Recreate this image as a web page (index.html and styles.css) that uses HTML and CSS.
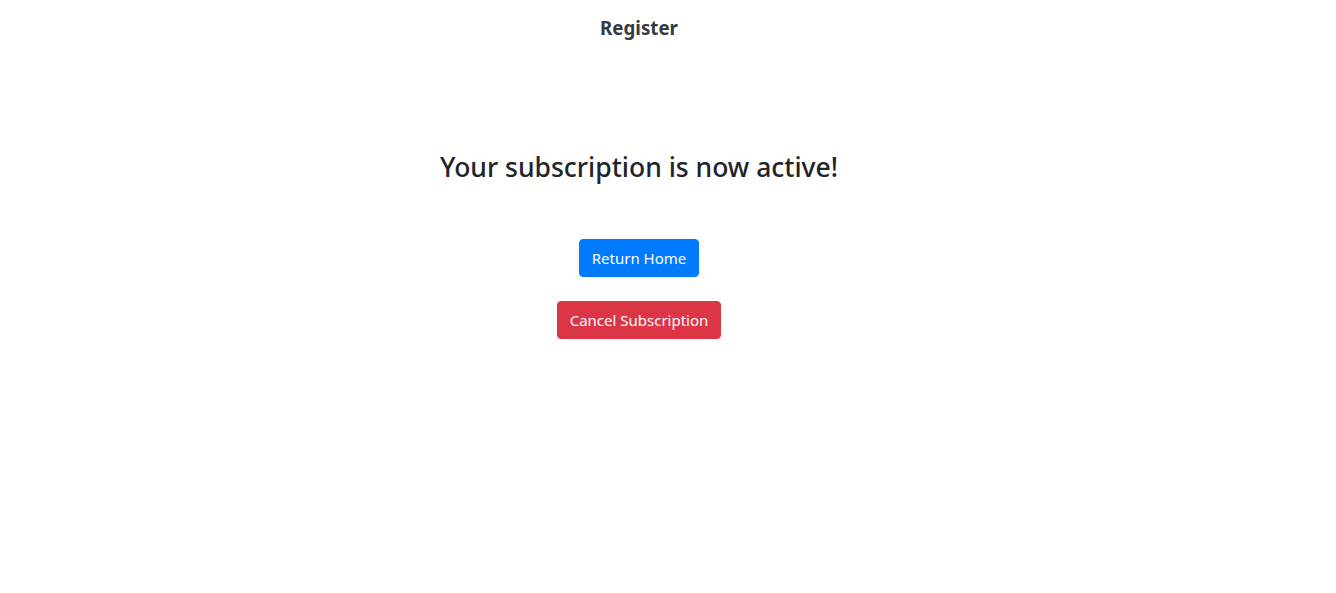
FILE: index.html
```html
<!DOCTYPE html>
<html lang="en">
<head>
<meta charset="utf-8">
<title>Register</title>
<link rel="stylesheet" href="styles.css">
</head>
<body>
<div class="page">
  <header class="header">
    <h1 class="brand">Register</h1>
  </header>
  <main class="content">
    <h3 class="title">Your subscription is now active!</h3>
    <div class="actions">
      <button class="btn btn-primary" type="button">Return Home</button>
      <button class="btn btn-danger" type="button">Cancel Subscription</button>
    </div>
  </main>
</div>
</body>
</html>
```
FILE: styles.css
```css
* { box-sizing: border-box; }
html, body { margin: 0; padding: 0; background: #fff; }
body {
  font-family: "Noto Sans", "Open Sans", "DejaVu Sans", sans-serif;
  color: #212529;
  width: 1336px;
  height: 593px;
  overflow: hidden;
}
.page {
  width: 1278px;
  display: flex;
  flex-direction: column;
  align-items: center;
}
.header {
  padding-top: 14px;
  height: 56px;
}
.brand {
  margin: 0;
  font-size: 18.7px;
  font-weight: 700;
  color: #343a40;
  line-height: 28px;
}
.content {
  display: flex;
  flex-direction: column;
  align-items: center;
  padding-top: 95px;
}
.title {
  margin: 0;
  font-size: 26.5px;
  font-weight: 500;
  line-height: 32px;
  color: #212529;
}
.actions {
  margin-top: 56px;
  display: flex;
  flex-direction: column;
  align-items: center;
  gap: 24px;
}
.btn {
  font-family: inherit;
  font-size: 15px;
  line-height: 24px;
  padding: 6px 12px;
  border: 1px solid transparent;
  border-radius: 4px;
  color: #fff;
  cursor: pointer;
}
.btn-primary { background: #007bff; border-color: #007bff; }
.btn-danger { background: #dc3545; border-color: #dc3545; }
```
